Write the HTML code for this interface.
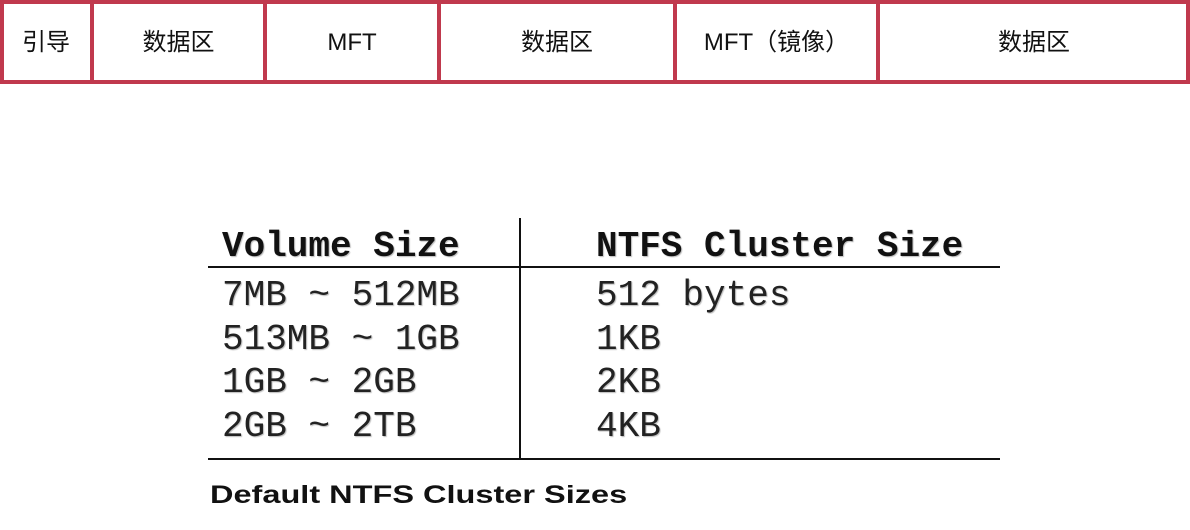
<!DOCTYPE html>
<html><head><meta charset="utf-8"><style>
body{margin:0;width:1190px;height:530px;background:#fff;position:relative;overflow:hidden}
.a{position:absolute}
.box{left:0;top:0;width:1182px;height:76px;border:4px solid #c0394d}
.v{top:0;width:4px;height:83px;background:#c0394d}
.c{top:0;height:83px;text-align:center;font:24px "Liberation Sans","Noto Sans CJK SC",sans-serif;line-height:86px;color:#111}
.m{font-family:"Liberation Mono",monospace;font-size:36px;color:#222;text-shadow:1px 1px 1px #bbb;white-space:pre;line-height:43.5px}
.h{font-weight:bold;color:#111}
.ln{height:2px;background:#111}
</style></head><body>
<div class="a box"></div>
<div class="a v" style="left:90px"></div>
<div class="a v" style="left:263px"></div>
<div class="a v" style="left:437px"></div>
<div class="a v" style="left:673px"></div>
<div class="a v" style="left:876px"></div>
<div class="a c" style="left:0;width:92px">引导</div>
<div class="a c" style="left:92px;width:173px">数据区</div>
<div class="a c" style="left:265px;width:174px">MFT</div>
<div class="a c" style="left:439px;width:236px">数据区</div>
<div class="a c" style="left:675px;width:203px">MFT（镜像）</div>
<div class="a c" style="left:878px;width:312px">数据区</div>

<div class="a m h" style="left:222px;top:225px">Volume Size</div>
<div class="a m h" style="left:596px;top:225px">NTFS Cluster Size</div>
<div class="a ln" style="left:208px;top:266px;width:792px"></div>
<div class="a ln" style="left:208px;top:458px;width:792px"></div>
<div class="a" style="left:519px;top:218px;width:2px;height:242px;background:#111"></div>
<div class="a m" style="left:222px;top:274px">7MB ~ 512MB
513MB ~ 1GB
1GB ~ 2GB
2GB ~ 2TB</div>
<div class="a m" style="left:596px;top:274px">512 bytes
1KB
2KB
4KB</div>
<div class="a" style="left:210px;top:481px;font:bold 25px 'Liberation Sans',sans-serif;color:#111;white-space:nowrap;transform:scaleX(1.3);transform-origin:0 0">Default NTFS Cluster Sizes</div>
</body></html>
